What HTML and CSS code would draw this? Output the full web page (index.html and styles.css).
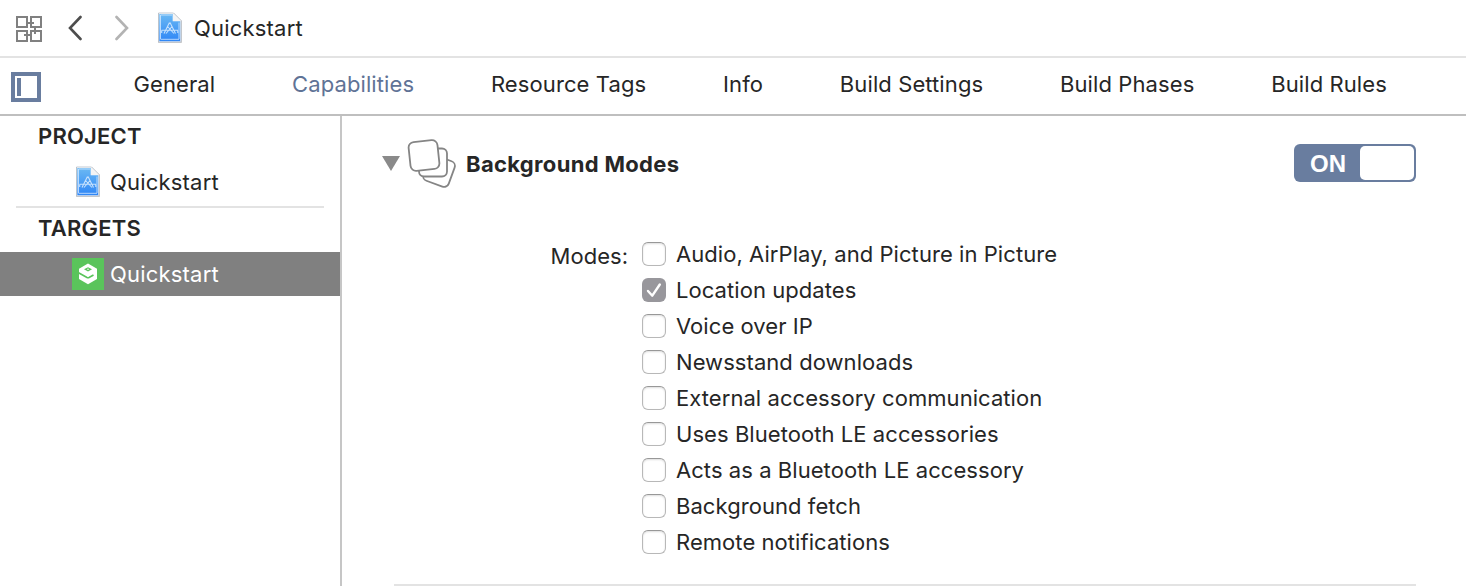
FILE: index.html
```html
<!DOCTYPE html>
<html lang="en">
<head>
<meta charset="utf-8">
<title>Quickstart</title>
<link rel="stylesheet" href="styles.css">
</head>
<body>
<svg class="defs" width="0" height="0">
  <defs>
    <linearGradient id="sheet" x1="0" y1="0" x2="0" y2="1"><stop offset="0" stop-color="#6bb9f3"/><stop offset="1" stop-color="#2f86f6"/></linearGradient>
    <symbol id="doc" viewBox="0 0 26 32">
      <path d="M1 1H17L25 9V31H1Z" fill="#b5b5b5" opacity=".6"/>
      <path d="M1.500 1H16.500L24 8.500V30H1.500Z" fill="#fff" stroke="#a7b3c0" stroke-width=".7"/>
      <path d="M2.300 1.900H15.700V9.300H23.200V29.300H2.300Z" fill="url(#sheet)"/>
      <path d="M3.500 27V3H15M22 10.500V27M3.500 27.300H22" fill="none" stroke="#d5eaff" stroke-width=".8"/>
      <path d="M16 1.500V9H23.700Z" fill="#f4f4f4"/>
      <path d="M12.500 10.500L7 21.500M13 10.500L18.500 21.500M4.500 18.300H21M10.500 14.500L17 21.500M15 14.500L9 21.500M4.700 18.500V21M20.800 18.500V21" fill="none" stroke="#c6e1fd" stroke-width="1.100"/>
    </symbol>
  </defs>
</svg>
<header class="toolbar">
  <svg class="grid-icon" width="26" height="26" viewBox="0 0 26 26" fill="none" stroke="#808080" stroke-width="2"><path d="M1 1H11V11H1ZM15 1H25V11H15ZM1 15H11V25H1ZM15 15H25V25H15ZM11 7H18M19 11V18M8 19H15"/></svg>
  <svg class="back" width="14" height="26" viewBox="0 0 14 26"><path d="M12.500 2L2 13L12.500 24" fill="none" stroke="#4d4d4d" stroke-width="2.600" stroke-linecap="round"/></svg>
  <svg class="forward" width="14" height="26" viewBox="0 0 14 26"><path d="M1.500 2L12 13L1.500 24" fill="none" stroke="#b3b3b3" stroke-width="2.600" stroke-linecap="round"/></svg>
  <svg class="doc-icon" width="26" height="32"><use href="#doc"/></svg>
  <span class="crumb">Quickstart</span>
</header>
<nav class="tabs">
  <svg class="panel-icon" width="30" height="30" viewBox="0 0 30 30"><path d="M2 2H28V28H2Z" fill="none" stroke="#697d9f" stroke-width="4"/><path d="M6 6H10V24H6Z" fill="#697d9f"/></svg>
  <div class="tab-list">
    <span class="tab">General</span>
    <span class="tab active">Capabilities</span>
    <span class="tab">Resource Tags</span>
    <span class="tab">Info</span>
    <span class="tab">Build Settings</span>
    <span class="tab">Build Phases</span>
    <span class="tab">Build Rules</span>
  </div>
</nav>
<div class="content">
  <aside class="sidebar">
    <h2 class="group">PROJECT</h2>
    <div class="item project"><svg class="item-icon" width="26" height="32"><use href="#doc"/></svg><span>Quickstart</span></div>
    <div class="divider"></div>
    <h2 class="group targets">TARGETS</h2>
    <div class="item selected">
      <svg class="item-icon" width="32" height="32" viewBox="0 0 32 32"><path fill="#5ac45b" d="M0 0H32V32H0Z"/><path fill="#fff" d="M16 5.500L25 10.700V21L16 26.200L7 21V10.700Z"/><path d="M6.500 14.800L15 19.500Q16 20 17 19.500L21.500 17" fill="none" stroke="#5ac45b" stroke-width="1.700"/><path d="M12 11.300L16 9.200L20 11.300L16 13.400Z" fill="#5ac45b"/><circle cx="16" cy="11.300" r=".8" fill="#fff"/></svg>
      <span>Quickstart</span>
    </div>
  </aside>
  <main class="main">
    <section class="capability">
      <div class="cap-head">
        <svg class="arrow" width="18" height="15" viewBox="0 0 18 15"><path d="M0 0H18L9 15Z" fill="#8a8a8a"/></svg>
        <svg class="cards" width="50" height="50" viewBox="0 0 50 50" fill="#fff" stroke="#858585" stroke-width="1.800"><rect x="18.500" y="18.500" width="27" height="27" rx="5" transform="rotate(20 32 32)"/><rect x="12" y="9.500" width="28" height="28" rx="5"/><rect x="2.500" y="2" width="29" height="29" rx="5.500" transform="rotate(-6 17 16.500)"/></svg>
        <h1 class="cap-title">Background Modes</h1>
        <div class="switch"><span class="switch-label">ON</span><span class="knob"></span></div>
      </div>
      <div class="modes">
        <span class="modes-label">Modes:</span>
        <div class="mode-list">
          <div class="mode"><i class="box"></i><span>Audio, AirPlay, and Picture in Picture</span></div>
          <div class="mode"><i class="box checked"><svg width="24" height="24" viewBox="0 0 24 24"><path d="M6 13L10.300 17.700L17.800 6.500" fill="none" stroke="#fff" stroke-width="2.400" stroke-linecap="round" stroke-linejoin="round"/></svg></i><span>Location updates</span></div>
          <div class="mode"><i class="box"></i><span>Voice over IP</span></div>
          <div class="mode"><i class="box"></i><span>Newsstand downloads</span></div>
          <div class="mode"><i class="box"></i><span>External accessory communication</span></div>
          <div class="mode"><i class="box"></i><span>Uses Bluetooth LE accessories</span></div>
          <div class="mode"><i class="box"></i><span>Acts as a Bluetooth LE accessory</span></div>
          <div class="mode"><i class="box"></i><span>Background fetch</span></div>
          <div class="mode"><i class="box"></i><span>Remote notifications</span></div>
        </div>
      </div>
    </section>
  </main>
</div>
</body>
</html>
```
FILE: styles.css
```css
* { box-sizing: border-box; }
body {
  margin: 0;
  height: 586px;
  display: flex;
  flex-direction: column;
  overflow: hidden;
  background: #fff;
  color: #262626;
  font: 22px/36px Inter, "Liberation Sans", sans-serif;
  letter-spacing: 0.2px;
  white-space: nowrap;
}
svg { display: block; flex: none; }
h1, h2 { margin: 0; font-size: inherit; }
.toolbar {
  height: 58px;
  flex: none;
  display: flex;
  align-items: center;
  padding-left: 16px;
  border-bottom: 2px solid #e3e3e3;
}
.grid-icon { margin-top: 2px; }
.back { margin-left: 26px; }
.forward { margin-left: 33px; }
.doc-icon { margin-left: 28px; }
.crumb { margin-left: 11px; }
.tabs {
  height: 58px;
  flex: none;
  display: flex;
  align-items: center;
  padding-left: 11px;
  border-bottom: 2px solid #bfbfbf;
}
.panel-icon { margin-top: 2px; }
.tab-list { display: flex; gap: 76.8px; margin: -4px 0 0 92.5px; letter-spacing: 0.1px; }
.active { color: #5f7396; }
.content { flex: 1; display: flex; min-height: 0; }
.sidebar { width: 342px; flex: none; border-right: 2px solid #c6c6c6; }
.group { height: 40px; padding-left: 38px; line-height: 40px; font-weight: 600; }
.item { display: flex; align-items: center; height: 44px; }
.project { margin-top: 4px; padding-left: 75px; gap: 9px; }
.divider { height: 2px; margin: 2px 16px 0; background: #e3e3e3; }
.targets { margin-bottom: 4px; }
.selected { gap: 6px; padding-left: 72px; background: #808080; color: #fff; }
.main { flex: 1; padding: 20px 50px 0 52px; }
.capability { height: 450px; border-bottom: 2px solid #e3e3e3; }
.cap-head { display: flex; align-items: center; height: 56px; margin-left: -12px; }
.arrow { margin-top: -2px; }
.cards { margin-left: 7px; }
.cap-title { margin-left: 9px; font-weight: 700; letter-spacing: 0.33px; }
.switch {
  display: flex;
  width: 122px;
  height: 38px;
  margin-left: auto;
  margin-top: -2px;
  padding: 2px;
  border-radius: 6px;
  background: #697d9f;
}
.switch-label { width: 64px; color: #fff; font: bold 24px/35px "Liberation Sans", Arial, sans-serif; text-align: center; letter-spacing: 0; }
.knob { width: 54px; height: 34px; border-radius: 5px; background: #fff; }
.modes { display: flex; padding: 44px 0 0 156px; letter-spacing: 0.06px; }
.modes-label { width: 92px; margin-top: 2px; padding-left: 0.5px; }
.mode { display: flex; align-items: center; height: 36px; gap: 10px; }
.box {
  width: 24px;
  height: 24px;
  flex: none;
  border: 1px solid #b8b8b8;
  border-top-color: #989898;
  border-radius: 6px;
  background: #fff;
  box-shadow: inset 0 1px 2px #ddd;
}
.checked { border: 0; background: #98979c; box-shadow: none; }
.defs { position: absolute; }
```
